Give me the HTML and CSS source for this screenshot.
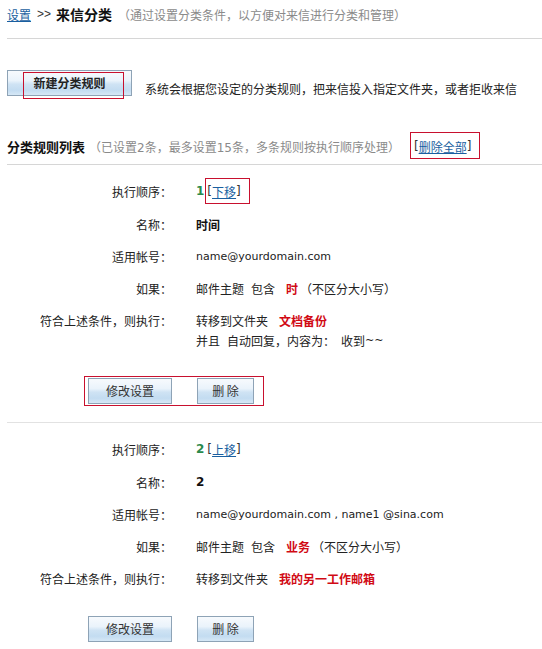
FILE: index.html
```html
<!DOCTYPE html>
<html lang="zh-CN">
<head>
<meta charset="utf-8">
<title>来信分类</title>
<link rel="stylesheet" href="styles.css">
</head>
<body>
<div class="page">
  <div class="crumbs">
    <a class="link" href="#">设置</a><span class="sep">&gt;&gt;</span><span class="title">来信分类</span><span class="hint">（通过设置分类条件，以方便对来信进行分类和管理）</span>
  </div>

  <div class="toolbar">
    <span class="new-wrap"><button class="btn btn-new" type="button">新建分类规则</button></span>
    <span class="desc">系统会根据您设定的分类规则，把来信投入指定文件夹，或者拒收来信</span>
  </div>

  <div class="list-head">
    <span class="list-title">分类规则列表</span>
    <span class="hint hint-list">（已设置2条，最多设置15条，多条规则按执行顺序处理）</span>
    <span class="mark mark-delall"><span>[</span><a class="link" href="#">删除全部</a><span>]</span></span>
  </div>

  <div class="rule">
    <div class="row row-first">
      <div class="label">执行顺序：</div>
      <div class="value"><div class="line"><b class="order">1</b><span class="mark mark-move"><span>[</span><a class="link" href="#">下移</a><span>]</span></span></div></div>
    </div>
    <div class="row">
      <div class="label">名称：</div>
      <div class="value"><div class="line"><b>时间</b></div></div>
    </div>
    <div class="row">
      <div class="label">适用帐号：</div>
      <div class="value"><div class="line"><span class="latin">name@yourdomain.com</span></div></div>
    </div>
    <div class="row">
      <div class="label">如果：</div>
      <div class="value"><div class="line"><span>邮件主题</span><span class="gap">包含</span><b class="kw">时</b><span class="paren">（不区分大小写）</span></div></div>
    </div>
    <div class="row">
      <div class="label">符合上述条件，则执行：</div>
      <div class="value">
        <div class="line"><span>转移到文件夹</span><b class="kw">文档备份</b></div>
        <div class="line"><span>并且</span><span class="gap">自动回复，内容为：</span><span class="gap2">收到</span><span class="latin">~~</span></div>
      </div>
    </div>
    <div class="actions">
      <div class="btn-group mark-actions">
        <button class="btn btn-edit" type="button">修改设置</button>
        <button class="btn btn-del" type="button">删 除</button>
      </div>
    </div>
  </div>

  <div class="rule">
    <div class="row row-first">
      <div class="label">执行顺序：</div>
      <div class="value"><div class="line"><b class="order">2</b><span class="bracket"><span>[</span><a class="link" href="#">上移</a><span>]</span></span></div></div>
    </div>
    <div class="row">
      <div class="label">名称：</div>
      <div class="value"><div class="line"><b class="latin-b">2</b></div></div>
    </div>
    <div class="row">
      <div class="label">适用帐号：</div>
      <div class="value"><div class="line"><span class="latin">name@yourdomain.com , name1 @sina.com</span></div></div>
    </div>
    <div class="row">
      <div class="label">如果：</div>
      <div class="value"><div class="line"><span>邮件主题</span><span class="gap">包含</span><b class="kw">业务</b><span class="paren">（不区分大小写）</span></div></div>
    </div>
    <div class="row">
      <div class="label">符合上述条件，则执行：</div>
      <div class="value"><div class="line"><span>转移到文件夹</span><b class="kw">我的另一工作邮箱</b></div></div>
    </div>
    <div class="actions">
      <div class="btn-group">
        <button class="btn btn-edit" type="button">修改设置</button>
        <button class="btn btn-del" type="button">删 除</button>
      </div>
    </div>
  </div>
</div>
</body>
</html>
```

FILE: styles.css
```css
html, body {
  margin: 0;
  padding: 0;
  background: #ffffff;
}

body {
  font-family: "DejaVu Sans", "Noto Sans CJK SC", sans-serif;
  font-size: 12px;
  color: #222222;
}

.page {
  padding: 0 0 0 7px;
}

.link {
  color: #1a5fa0;
  text-decoration: underline;
}

/* breadcrumb header */
.crumbs {
  padding: 4px 0 14px 0;
  height: 20px;
  border-bottom: 1px solid #d6d6d6;
  display: flex;
  align-items: center;
  white-space: nowrap;
}

.sep {
  font-family: "Liberation Sans", sans-serif;
  font-size: 12px;
  color: #333333;
  margin: 0 5px 0 6px;
}

.title {
  font-family: "Noto Sans CJK SC", sans-serif;
  font-size: 14px;
  font-weight: bold;
  color: #111111;
  margin-right: 6px;
}

.hint {
  color: #8a8a8a;
}

/* toolbar */
.toolbar {
  margin-top: 31px;
  display: flex;
  align-items: flex-start;
}

.new-wrap {
  position: relative;
  display: inline-flex;
}

.new-wrap::after {
  content: "";
  position: absolute;
  left: 16px;
  top: 2px;
  width: 99px;
  height: 25px;
  border: 1px solid #c8102e;
  pointer-events: none;
}

.desc {
  margin: 8px 0 0 13px;
  height: 20px;
  display: flex;
  align-items: center;
  color: #222222;
  white-space: nowrap;
}

/* buttons */
.btn {
  font-family: "Noto Sans CJK SC", sans-serif;
  font-size: 12px;
  color: #333333;
  border: 1px solid #8ea3b6;
  background: linear-gradient(#f7fafd 0%, #eaf3fb 40%, #cfe3f4 55%, #c3dcf1 80%, #d6e8f6 100%);
  padding: 0;
  margin: 0;
  height: 26px;
  line-height: 24px;
  cursor: pointer;
}

.btn-new {
  width: 125px;
  font-weight: bold;
  color: #222222;
}

.btn-edit {
  width: 84px;
}

.btn-del {
  width: 57px;
}

/* list heading */
.list-head {
  margin-top: 38px;
  padding-bottom: 8px;
  height: 20px;
  border-bottom: 1px solid #d6d6d6;
  display: flex;
  align-items: center;
  white-space: nowrap;
}

.list-title {
  font-family: "Noto Sans CJK SC", sans-serif;
  font-size: 13px;
  font-weight: bold;
  color: #111111;
  margin-right: 4px;
}

.hint-list {
  margin-right: 14px;
}

.mark {
  position: relative;
  display: inline-flex;
  align-items: center;
  height: 20px;
}

.mark::after {
  content: "";
  position: absolute;
  border: 1px solid #c8102e;
  pointer-events: none;
}

.mark-delall {
  color: #333333;
}

.mark-delall::after {
  left: -4px;
  right: -9px;
  top: -4px;
  bottom: -3px;
}

/* rules */
.rule {
  padding: 16px 0 18px 0;
  border-bottom: 1px solid #e2e2e2;
}

.rule:last-child {
  border-bottom: none;
}

.row {
  display: grid;
  grid-template-columns: 165px 1fr;
  column-gap: 24px;
  margin-bottom: 12px;
}

.row-first {
  margin-bottom: 13px;
}

.label {
  height: 20px;
  display: flex;
  align-items: center;
  justify-content: flex-end;
  color: #222222;
  white-space: nowrap;
}

.line {
  height: 20px;
  display: flex;
  align-items: center;
  white-space: pre;
}

.value b {
  font-family: "Noto Sans CJK SC", sans-serif;
  font-weight: bold;
  color: #111111;
}

.value b.latin-b {
  font-family: "DejaVu Sans", sans-serif;
  font-size: 12px;
}

.value b.order {
  font-family: "DejaVu Sans", sans-serif;
  color: #2a8a4c;
  margin-right: 3px;
}

.mark-move::after {
  left: -2px;
  right: -9px;
  top: -3px;
  bottom: -3px;
}

.bracket,
.mark-move {
  color: #333333;
  display: inline-flex;
  align-items: center;
}

.latin {
  font-family: "DejaVu Sans", sans-serif;
  font-size: 11px;
  color: #222222;
}

.gap {
  margin-left: 7px;
}

.gap2 {
  margin-left: 6px;
}

.value b.kw {
  color: #d10a14;
  margin-left: 11px;
}

.paren {
  margin-left: 2px;
}

.actions {
  margin-top: 28px;
  padding-left: 81px;
  display: flex;
}

.btn-group {
  display: inline-flex;
  gap: 25px;
  position: relative;
}

.mark-actions::after {
  content: "";
  position: absolute;
  left: -4px;
  right: -10px;
  top: -2px;
  bottom: -2px;
  border: 1px solid #c8102e;
  pointer-events: none;
}
```
